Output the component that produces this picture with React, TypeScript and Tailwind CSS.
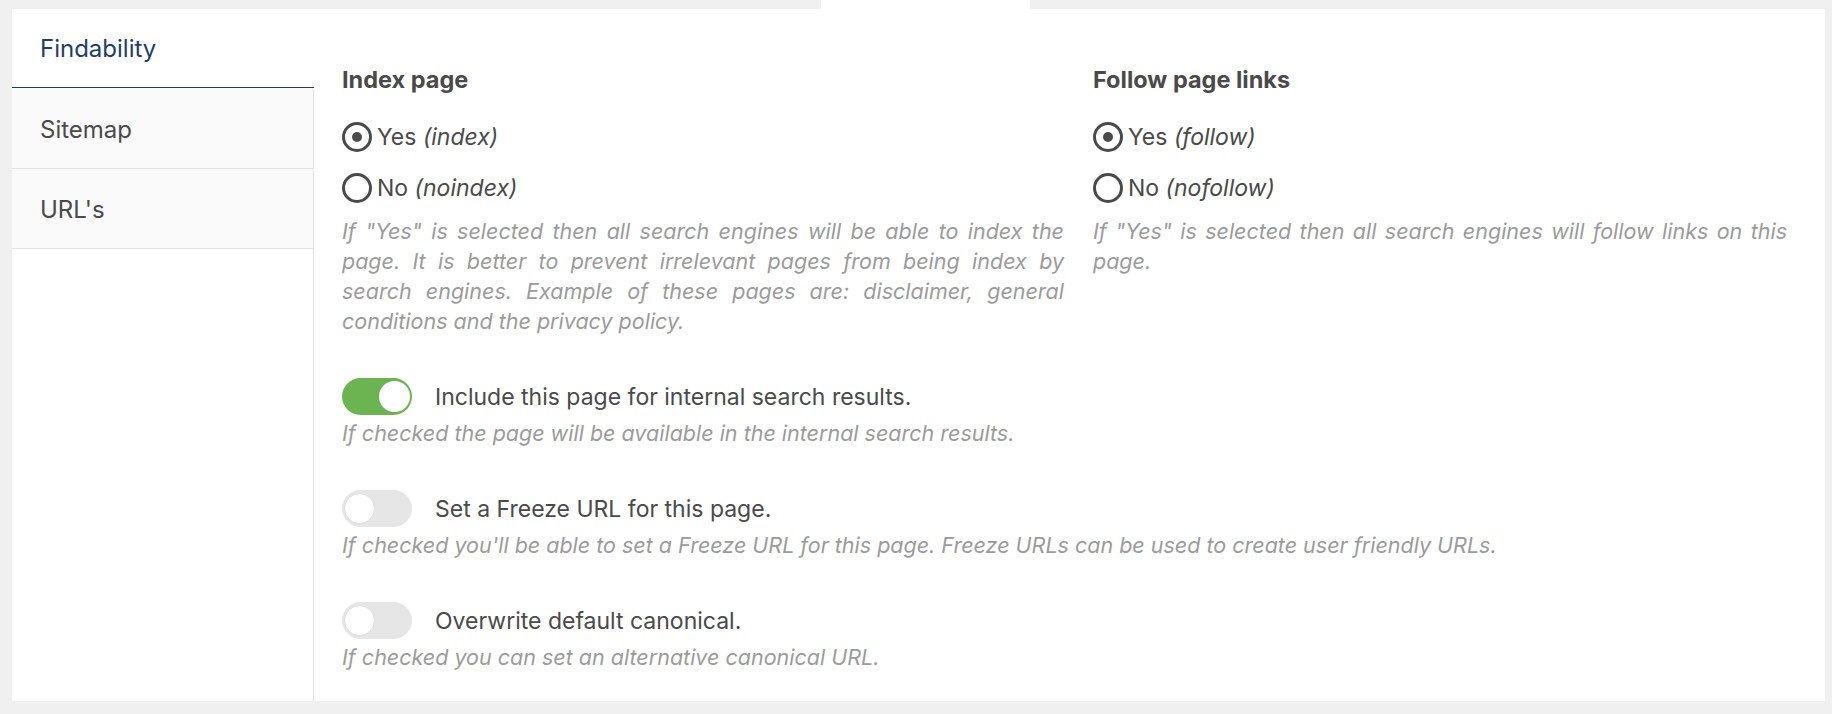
import React from "react";

function Radio({ checked, main, hint }: { checked: boolean; main: string; hint: string }) {
  return (
    <div className="flex items-center h-[30px] gap-[5px]">
      <div className="w-[30px] h-[30px] rounded-full border-[3px] border-[#4a4a4a] flex items-center justify-center shrink-0">
        {checked && <div className="w-[10px] h-[10px] rounded-full bg-[#4a4a4a]" />}
      </div>
      <span className="text-[23px] leading-[30px] text-[#4a4a4a]">
        {main} <span className="italic">{hint}</span>
      </span>
    </div>
  );
}

function Toggle({ on }: { on: boolean }) {
  return (
    <div
      className={
        on
          ? "w-[70px] h-[37px] rounded-full bg-[#6cb351] flex items-center justify-end pr-[2px] shrink-0"
          : "w-[70px] h-[37px] rounded-full bg-[#e6e6e6] flex items-center justify-start pl-[2px] shrink-0"
      }
    >
      <div
        className={
          on
            ? "w-[31px] h-[31px] rounded-full bg-white"
            : "w-[31px] h-[31px] rounded-full bg-white border border-[#dedede]"
        }
      />
    </div>
  );
}

function ToggleBlock({ on, label, desc }: { on: boolean; label: string; desc: string }) {
  return (
    <div className="mt-[42px]">
      <div className="flex items-center h-[37px] gap-[23px]">
        <Toggle on={on} />
        <span className="text-[23px] leading-[30px] text-[#4a4a4a]">{label}</span>
      </div>
      <p className="mt-[3px] text-[21.5px] leading-[30px] italic text-[#9b9b9b]">{desc}</p>
    </div>
  );
}

export default function App() {
  return (
    <div className="w-full h-[714px] bg-[#f0f0f0] pl-[12px] pr-[7px] pb-[13px] flex flex-col font-[Inter,'Noto_Sans',sans-serif]">
      <div className="h-[9px] flex shrink-0">
        <div className="ml-[809px] w-[209px] bg-white" />
      </div>
      <div className="flex flex-1 bg-white">
        <div className="w-[302px] flex flex-col shrink-0">
          <div className="h-[79px] flex items-center pl-[28px] pt-[2px] text-[24px] text-[#1f3d68] border-b border-[#1f3d68]">
            Findability
          </div>
          <div className="h-[81px] flex items-center pl-[28px] pt-[3px] text-[24px] text-[#4a4a4a] bg-[#fafafa] border-r border-b border-[#e3e3e3] rounded-tr-[3px]">
            Sitemap
          </div>
          <div className="h-[80px] flex items-center pl-[28px] pt-[3px] text-[24px] text-[#4a4a4a] bg-[#fafafa] border-r border-b border-[#e3e3e3] rounded-tr-[3px]">
            URL's
          </div>
          <div className="flex-1 border-r border-[#e3e3e3]" />
        </div>
        <div className="flex-1 pl-[28px] pt-[55px]">
          <div className="flex gap-[29px]">
            <div className="w-[722px]">
              <div className="h-[32px] leading-[32px] text-[23.5px] font-bold text-[#4a4a4a]">Index page</div>
              <div className="mt-[26px]">
                <Radio checked main="Yes" hint="(index)" />
              </div>
              <div className="mt-[21px]">
                <Radio checked={false} main="No" hint="(noindex)" />
              </div>
              <p className="mt-[13px] text-[21.5px] leading-[30px] italic text-justify text-[#9b9b9b]">
                If "Yes" is selected then all search engines will be able to index the page. It is better to prevent
                irrelevant pages from being index by search engines. Example of these pages are: disclaimer, general
                conditions and the privacy policy.
              </p>
            </div>
            <div className="w-[694px]">
              <div className="h-[32px] leading-[32px] text-[23.5px] font-bold text-[#4a4a4a]">Follow page links</div>
              <div className="mt-[26px]">
                <Radio checked main="Yes" hint="(follow)" />
              </div>
              <div className="mt-[21px]">
                <Radio checked={false} main="No" hint="(nofollow)" />
              </div>
              <p className="mt-[13px] text-[21.5px] leading-[30px] italic text-justify text-[#9b9b9b]">
                If "Yes" is selected then all search engines will follow links on this page.
              </p>
            </div>
          </div>
          <ToggleBlock
            on
            label="Include this page for internal search results."
            desc="If checked the page will be available in the internal search results."
          />
          <ToggleBlock
            on={false}
            label="Set a Freeze URL for this page."
            desc="If checked you'll be able to set a Freeze URL for this page. Freeze URLs can be used to create user friendly URLs."
          />
          <ToggleBlock
            on={false}
            label="Overwrite default canonical."
            desc="If checked you can set an alternative canonical URL."
          />
        </div>
      </div>
    </div>
  );
}
